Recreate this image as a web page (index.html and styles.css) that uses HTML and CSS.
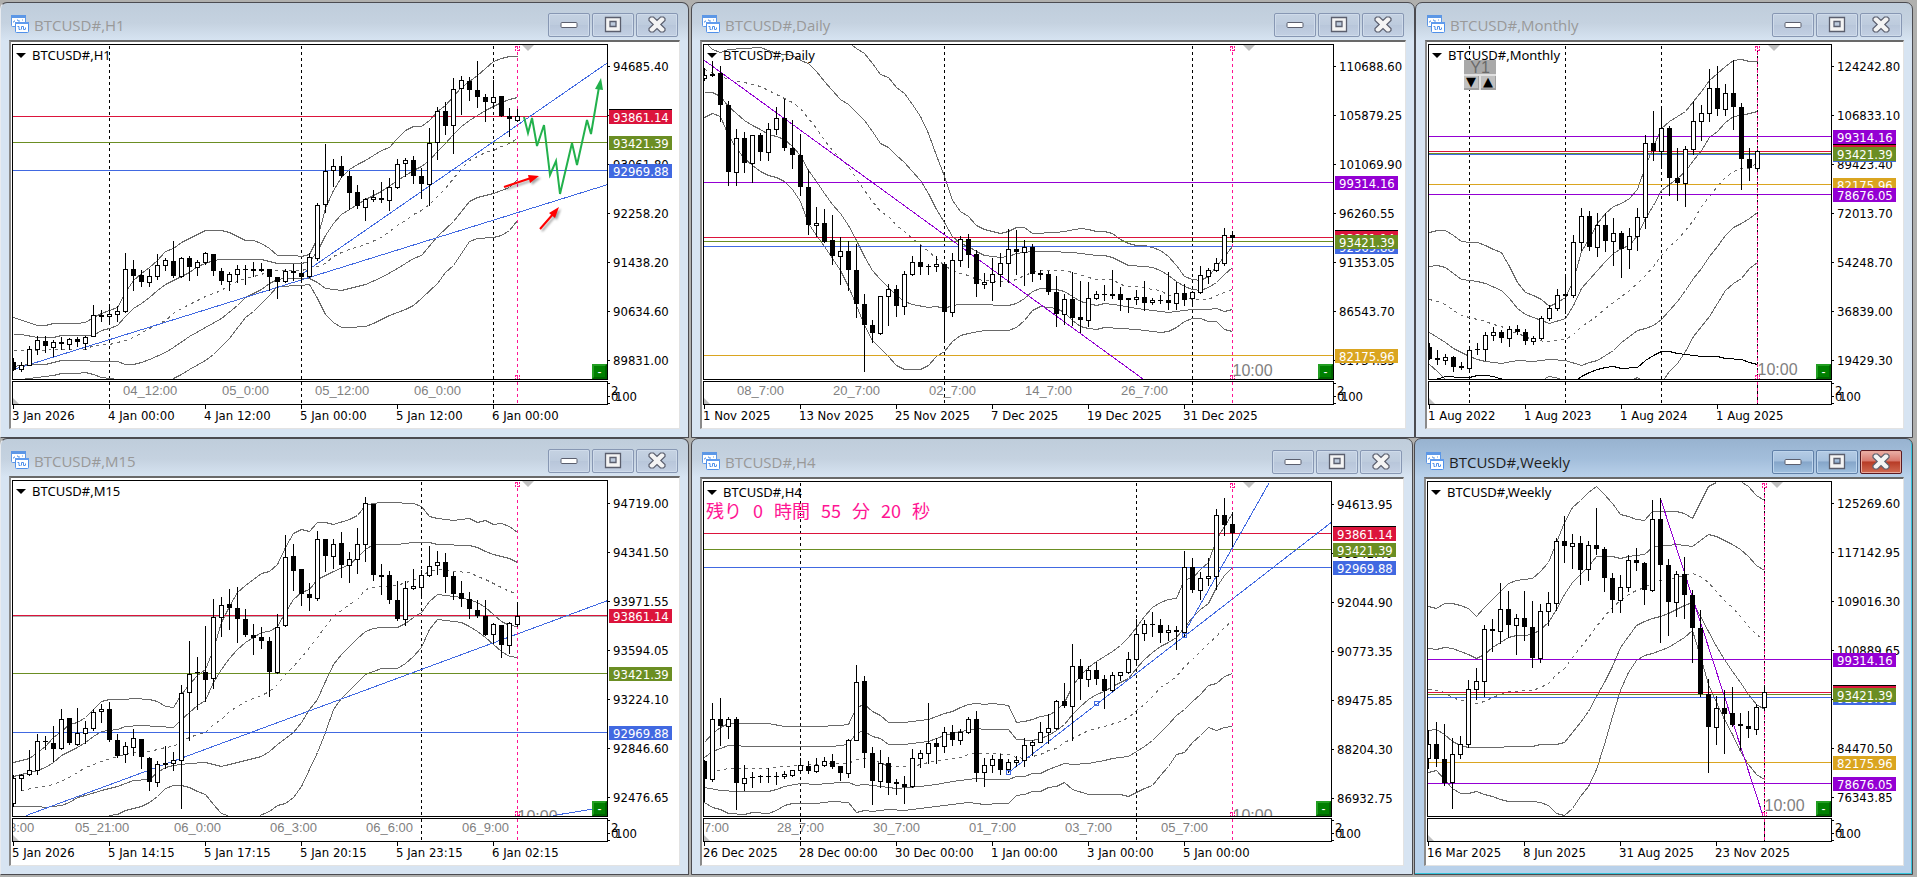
FILE: index.html
```
<!DOCTYPE html>
<html lang="en">
<head>
<meta charset="utf-8">
<title>BTCUSD# charts</title>
<link rel="stylesheet" href="styles.css">
</head>
<body>
<svg class="sprite" width="0" height="0" aria-hidden="true">
  <symbol id="icon-chart" viewBox="0 0 18 18">
    <rect x="0.5" y="0.5" width="14" height="11" rx="1" fill="#fff" stroke="#5c97e6"/>
    <rect x="0" y="0" width="15" height="3" fill="#5c97e6"/>
    <path d="M2 7h1V6h1M6 5h1v1h2M11 5h1" fill="none" stroke="#5c97e6"/>
    <rect x="4.5" y="7.500" width="13" height="10" rx="1" fill="#fff" stroke="#4f90ea"/>
    <rect x="4" y="7" width="14" height="2" fill="#5f9bee"/>
    <path d="M6.500 11.500h1.500v3h1.500M10.500 14.500v-3h2v3h1.500M14.500 12.500v2" fill="none" stroke="#4f90ea"/>
  </symbol>
  <symbol id="icon-min" viewBox="0 0 18 18">
    <rect x="1" y="6.5" width="16" height="5" rx="1" fill="#fff" stroke="#5b5f6e"/>
  </symbol>
  <symbol id="icon-max" viewBox="0 0 18 18">
    <path fill-rule="evenodd" d="M1.5 1.5h15v14h-15zM6 5.500h6v5h-6z" fill="#f4f4f4" stroke="#5b5f6e" stroke-width="1.300"/>
  </symbol>
  <symbol id="icon-close" viewBox="0 0 18 18">
    <path d="M1 2.500L2.500 1H5.500L9 4.500L12.500 1H15.500L17 2.500V4.500L12.800 8.500L17 12.500V14.500L15.500 16H12.500L9 12.500L5.500 16H2.500L1 14.500V12.500L5.200 8.500L1 4.500Z" fill="#f4f4f4" stroke="#5b5f6e" stroke-width="1.200"/>
  </symbol>
</svg>

<main class="desk">
  <div class="desk-row desk-row-top">
    <section class="win win-edge" data-chart="h1">
      <header class="bar"><svg class="bar-icon"><use href="#icon-chart"/></svg><h2 class="bar-title">BTCUSD#,H1</h2>
        <div class="bar-buttons"><button aria-label="Minimize"><svg><use href="#icon-min"/></svg></button><button aria-label="Maximize"><svg><use href="#icon-max"/></svg></button><button class="close" aria-label="Close"><svg><use href="#icon-close"/></svg></button></div></header>
      <div class="client"></div>
    </section>
    <section class="win" data-chart="daily">
      <header class="bar"><svg class="bar-icon"><use href="#icon-chart"/></svg><h2 class="bar-title">BTCUSD#,Daily</h2>
        <div class="bar-buttons"><button aria-label="Minimize"><svg><use href="#icon-min"/></svg></button><button aria-label="Maximize"><svg><use href="#icon-max"/></svg></button><button class="close" aria-label="Close"><svg><use href="#icon-close"/></svg></button></div></header>
      <div class="client"></div>
    </section>
    <section class="win win-wide" data-chart="monthly">
      <header class="bar"><svg class="bar-icon"><use href="#icon-chart"/></svg><h2 class="bar-title">BTCUSD#,Monthly</h2>
        <div class="bar-buttons"><button aria-label="Minimize"><svg><use href="#icon-min"/></svg></button><button aria-label="Maximize"><svg><use href="#icon-max"/></svg></button><button class="close" aria-label="Close"><svg><use href="#icon-close"/></svg></button></div></header>
      <div class="client"></div>
    </section>
  </div>
  <div class="desk-row desk-row-bottom">
    <section class="win win-edge" data-chart="m15">
      <header class="bar"><svg class="bar-icon"><use href="#icon-chart"/></svg><h2 class="bar-title">BTCUSD#,M15</h2>
        <div class="bar-buttons"><button aria-label="Minimize"><svg><use href="#icon-min"/></svg></button><button aria-label="Maximize"><svg><use href="#icon-max"/></svg></button><button class="close" aria-label="Close"><svg><use href="#icon-close"/></svg></button></div></header>
      <div class="client"></div>
    </section>
    <section class="win win-lower" data-chart="h4">
      <header class="bar"><svg class="bar-icon"><use href="#icon-chart"/></svg><h2 class="bar-title">BTCUSD#,H4</h2>
        <div class="bar-buttons"><button aria-label="Minimize"><svg><use href="#icon-min"/></svg></button><button aria-label="Maximize"><svg><use href="#icon-max"/></svg></button><button class="close" aria-label="Close"><svg><use href="#icon-close"/></svg></button></div></header>
      <div class="client"></div>
    </section>
    <section class="win win-lower win-active" data-chart="weekly">
      <header class="bar"><svg class="bar-icon"><use href="#icon-chart"/></svg><h2 class="bar-title">BTCUSD#,Weekly</h2>
        <div class="bar-buttons"><button aria-label="Minimize"><svg><use href="#icon-min"/></svg></button><button aria-label="Maximize"><svg><use href="#icon-max"/></svg></button><button class="close" aria-label="Close"><svg><use href="#icon-close"/></svg></button></div></header>
      <div class="client"></div>
    </section>
  </div>
</main>
<script src="charts.js"></script>
</body>
</html>
```
FILE: styles.css
```
* { box-sizing: border-box; }

html, body { margin: 0; height: 100%; }

body {
  background: #b0b0ae;
  font-family: "DejaVu Sans Condensed", "Noto Sans", sans-serif;
  font-size: 13px;
  color: #000;
  overflow: hidden;
}

.sprite { position: absolute; }

.desk {
  display: grid;
  grid-template-rows: 436fr 437fr;
  min-height: 100vh;
  padding: 2px 4px 2px 0;
}

.desk-row { display: grid; }
.desk-row-top { grid-template-columns: 689fr 726fr 498fr; }
.desk-row-bottom { grid-template-columns: 689fr 724fr 500fr; }

.win {
  display: grid;
  grid-template-rows: 37px 1fr;
  margin-left: 2px;
  padding: 0 8px 8px;
  border: 1px solid #4b4b50;
  border-radius: 7px 7px 0 0;
  background: linear-gradient(#bfcddb, #c5d2e0 20px, #d7e4f2 38px);
}
.win-edge { margin-left: 0; border-left-color: #e8ebf0; }
.win-wide { margin-left: 0; padding-left: 9px; }
.win-lower { padding-top: 1px; }
.win-active {
  margin-left: 1px;
  padding-left: 9px;
  background: linear-gradient(#98b3d0, #a3bedb 20px, #b9d1ea 38px);
  box-shadow: inset -1px -1px 0 #35c5dc;
}

.bar {
  display: flex;
  align-items: center;
  gap: 5px;
  padding: 9px 2px 0;
  height: 37px;
}
.bar-icon { width: 18px; height: 18px; margin-bottom: 4px; }
.bar-title {
  flex: 1;
  margin: 0 0 3px;
  font: 400 15px/20px "Open Sans", "Noto Sans", sans-serif;
  color: #999;
}
.win-active .bar-title { color: #1e1e1e; }

.bar-buttons { display: flex; gap: 2px; margin-bottom: 3px; }
.bar-buttons button {
  display: grid;
  place-items: center;
  width: 42px;
  height: 24px;
  padding: 0;
  border: 1px solid #8797b3;
  border-radius: 2px;
  background: linear-gradient(#c5d2e2, #bdcbdd 50%, #b8c6da 51%, #c3d0e3);
  box-shadow: inset 0 0 0 1px #cfdbea;
}
.bar-buttons svg { width: 18px; height: 18px; }
.win-active .bar-buttons button {
  border-color: #6080a8;
  background: linear-gradient(#b5cce5, #a5c0dd 45%, #85a5c9 50%, #a0c0df);
  box-shadow: inset 0 0 0 1px #bdd4ec;
}
.win-active .bar-buttons .close {
  border-color: #5b1a22;
  background: linear-gradient(#eab0a8, #d8796d 45%, #b73b26 50%, #d06a52);
  box-shadow: inset 0 0 0 1px #e9a99c;
}

.client {
  display: grid;
  grid-template-columns: 1fr 71px;
  grid-template-rows: 1fr 24px 22px;
  row-gap: 1px;
  padding: 2px 0 0 1px;
  border-top: 2px solid #696969;
  border-left: 2px solid #8a8a8a;
  border-right: 1px solid #e3e3e3;
  border-bottom: 1px solid #e3e3e3;
  background: #fff;
}
.client svg { display: block; width: 100%; height: 100%; overflow: hidden; }

.plot { position: relative; border: 1px solid #000; min-height: 300px; }
.plot > svg { position: absolute; inset: 0; }
.sub { border: 1px solid #000; }
.dates { grid-column: 1 / 3; margin-top: -1px; }

.symbol {
  position: absolute;
  top: 1px;
  left: 3px;
  display: flex;
  align-items: center;
  gap: 6px;
  font: 13px/18px "Noto Sans", sans-serif;
}
.symbol::before {
  content: "";
  border: solid transparent;
  border-width: 5px 5px 0;
  border-top-color: #000;
}

.toggle {
  position: absolute;
  right: 0;
  bottom: 0;
  width: 15px;
  height: 15px;
  padding: 0;
  border: 2px solid #006400;
  border-top-color: #229e22;
  border-left-color: #229e22;
  background: #008000;
  color: #fff;
  font: 12px/10px "Liberation Sans", sans-serif;
}

.countdown {
  position: absolute;
  top: 18px;
  left: 2px;
  display: flex;
  gap: 11px;
  color: #ff1493;
  font: 18px/20px "Noto Sans CJK JP", sans-serif;
}

.year-picker {
  position: absolute;
  top: 15px;
  left: 35px;
  display: grid;
  grid-template-columns: 1fr 1fr;
  gap: 2px;
  width: 32px;
  background: #e0e0e0;
}
.year-picker span {
  grid-column: 1 / 3;
  height: 14px;
  background: #a9a9a9;
  color: #696969;
  font: 16px/16px "Liberation Sans", sans-serif;
  text-align: center;
}
.year-picker button {
  height: 14px;
  padding: 0;
  border: solid #a0a0a0;
  border-width: 0 1px 2px 0;
  background: #c0c0c0;
  font: 13px/12px "DejaVu Sans", sans-serif;
  color: #000;
}

.line, .band, .trend { fill: none; shape-rendering: crispEdges; }
.band { stroke: #696969; }
.band-mid { stroke-dasharray: 3 4; }
.band-dark { stroke: #000; }
.trend { stroke: #4169e1; }
.wick, .body, .hollow, .tick { shape-rendering: crispEdges; }
.hollow { fill: #fff; }
.grey { fill: #808080; font-family: "Liberation Sans", sans-serif; }
.grey-small { font-size: 13px; }
.grey-large { font-size: 16px; }
.price-on { fill: #fff; }
.shift { fill: #c0c0c0; }

.crimson { stroke: #dc143c; }
.olive { stroke: #6b8e23; }
.blue { stroke: #4169e1; }
.violet { stroke: #9400d3; }
.gold { stroke: #daa520; }
.silver { stroke: #b0b0b0; }
.pink { stroke: #ff1493; }
.black { stroke: #000; }
.dash { stroke-dasharray: 3 3; }
.dot { stroke-dasharray: 2 4; }
.box-crimson { fill: #dc143c; }
.box-olive { fill: #6b8e23; }
.box-blue { fill: #4169e1; }
.box-violet { fill: #9400d3; }
.box-gold { fill: #daa520; }

.forecast { fill: none; stroke: #22b14c; stroke-width: 2; }
.forecast-tip { fill: #22b14c; }
.arrow { fill: none; stroke: #f00; stroke-width: 2; }
.arrow-tip { fill: #f00; }
.arrows { filter: drop-shadow(2px 2px 1px rgba(0, 0, 0, 0.35)); }
```
FILE: charts.js
```
// Prices are stored in thirds of a pixel; bars are 8px apart.
// candles: type, body top, body bottom, high, low. bands: bar index : level.
const CHARTS = {
  h1: {
    symbol: 'BTCUSD#,H1', top: 45, now: 63, shift: 515,
    candles: 'b1087,1112,1075,1112 w1095,1108,1088,1114 w1048,1096,1038,1096 w1021,1048,1009,1062 b1023,1040,1009,1058 w1027,1042,1022,1070 b1026,1034,1011,1047 w1018,1033,1014,1047 b1017,1028,1013,1040 w1012,1030,1008,1048 w946,1009,915,1010 b945,951,930,965 w943,949,918,965 w934,943,920,965 w808,934,759,936 b808,830,780,870 b825,846,812,858 w829,847,808,858 w796,829,762,838 w781,796,775,810 b783,830,723,831 w775,829,772,833 b774,803,770,840 w787,802,781,827 w760,787,756,794 b762,815,762,827 b813,845,805,854 w823,844,818,870 w808,823,796,846 b807,812,797,854 b809,813,786,828 b807,813,790,815 b807,833,807,872 b831,846,831,896 w814,844,808,848 b813,821,793,840 b819,832,796,843 w772,829,761,831 w616,775,609,780 w514,613,432,638 w499,511,478,558 b499,530,468,532 b528,580,513,628 b576,620,556,624 w598,622,594,662 w592,598,570,603 b594,602,546,606 w562,601,534,632 w493,562,477,566 w481,490,474,528 b480,530,468,551 b528,554,505,594 w430,553,384,617 w334,427,321,477 b333,380,307,402 w268,376,234,461 w241,265,228,342 b243,272,232,302 b270,293,183,321 b291,308,283,363 w292,307,240,318 b290,350,288,350 b348,359,324,408 w349,361,327,363',
    bands: [
      '0:953 3:976 4:975 5:971 8:971 9:967 10:952 11:940 12:932 13:922 14:878 15:842 16:820 17:803 18:780 19:754 20:744 21:728 22:715 24:691 26:692 27:698 29:720 30:722 31:730 32:745 33:766 35:766 36:769 37:763 38:715 39:625 40:570 41:533 42:508 43:494 44:481 45:466 46:452 47:441 48:415 49:390 50:380 51:378 52:362 53:335 54:315 55:290 56:262 57:245 58:225 59:205 60:185 61:174 62:170 63:170',
      '0:1003 1:1003 3:1013 5:1013 6:1007 10:1007 11:990 12:985 13:975 14:950 15:925 16:910 17:893 18:872 19:853 20:842 21:830 22:817 23:800 24:790 25:781 26:778 31:778 32:785 33:790 36:790 37:783 38:755 39:705 40:670 41:643 42:628 44:598 46:575 48:540 49:525 50:510 51:500 52:482 53:455 54:430 55:403 56:380 57:360 58:345 59:330 60:318 61:306 62:298 63:292',
      '0:1098 2:1093 4:1092 6:1081 13:1085 14:1094 15:1094 16:1088 17:1078 19:1057 20:1042 22:1010 24:982 26:955 28:915 29:892 30:880 31:868 32:850 33:837 34:835 37:835 38:848 39:865 40:869 41:871 42:866 44:854 46:832 48:805 50:775 51:765 53:710 55:665 56:635 57:605 58:592 60:580 61:572 62:562 63:538',
      '1:1137 3:1132 5:1127 6:1121 8:1120 9:1117 10:1123 11:1131 12:1135 13:1137',
      '20:1136 21:1122 22:1107 24:1081 25:1063 27:1015 29:952 30:935 31:910 32:885 33:858 36:856 37:853 38:895 39:943 40:968 41:981 42:982 44:979 45:970 47:945 49:928 50:915 51:895 53:850 54:818 55:795 56:760 57:725 58:715 60:712 61:706 62:690 63:660'
    ],
    mid: '0:1052 1:1050 4:1052 5:1047 9:1047 10:1036 12:1034 13:1028 14:1022 15:1012 17:985 19:960 20:940 21:924 24:888 26:870 27:853 29:835 31:822 32:812 36:812 37:805 38:800 39:790 40:770 41:757 42:748 44:732 46:712 48:675 49:660 50:642 51:630 52:612 53:590 54:565 55:535 56:505 57:480 58:470 59:458 60:450 61:438 62:430 63:414',
    trends: [[0, 1107, 74.3, 553], [36, 822, 74.3, 187]],
    levels: [[349, 'crimson'], [427, 'olive'], [511, 'blue']],
    verticals: [12, 36, 60],
    axis: [[199, '94685.40'], [346, '93865.40'], [493, '93061.80'], [640, '92258.20'], [787, '91438.20'], [934, '90634.60'], [1081, '89831.00']],
    boxes: [[349, 'crimson', '93861.14', 1], [427, 'olive', '93421.39'], [511, 'blue', '92969.88']],
    subs: [[110, '04_12:00'], [209, '05_0:00'], [302, '05_12:00'], [401, '06_0:00']],
    dates: ['3 Jan 2026', '4 Jan 00:00', '4 Jan 12:00', '5 Jan 00:00', '5 Jan 12:00', '6 Jan 00:00'],
    forecast: true
  },
  daily: {
    symbol: 'BTCUSD#,Daily', top: 45, now: 66, shift: 545, timer: 1128,
    candles: 'w225,234,205,240 b222,228,183,230 b219,317,199,365 b315,518,303,557 w415,517,387,557 b414,491,396,517 w406,491,405,548 b405,458,399,482 w388,458,369,482 w355,388,321,402 b354,446,297,452 b444,467,362,504 b465,563,402,587 b561,677,510,702 w670,677,621,708 b669,726,627,728 b720,770,645,792 w754,770,711,852 b753,812,723,872 b810,912,732,951 b912,977,882,1115 b975,1001,960,1028 w889,1001,888,1004 w868,889,852,975 b867,920,856,948 w823,920,813,944 w787,823,769,827 b786,803,735,824 b798,802,792,824 w793,798,768,815 b792,938,792,1020 w781,938,759,948 w718,781,708,800 b717,765,702,803 b762,854,750,890 w847,853,820,864 w823,847,774,900 w790,823,759,860 w748,790,687,846 b747,758,692,822 w742,758,722,855 b741,824,732,845 b821,825,811,838 b822,878,814,882 b876,944,828,978 w898,943,882,974 b897,954,816,975 b951,962,843,998 w895,962,846,980 w882,895,873,898 b882,887,855,902 b882,888,810,894 b882,900,861,932 b896,900,894,938 w892,898,870,914 b891,909,843,932 w901,907,896,914 b900,903,885,910 b900,911,816,927 w880,910,846,927 b879,900,852,915 w877,896,873,910 w826,877,798,880 w811,829,804,851 w790,811,774,815 w706,790,684,795 b705,714,693,726',
    bands: [
      '18.5:135 19:145 20:160 21:190 22:222 23:232 24:262 25:279 26:312 27:350 28:400 29:465 30:530 31:600 32:635 33:650 34:675 35:688 37:699 38:693 39:683 40:683 41:699 44:697 45:694 47:685 48:687 49:694 50:695 51:700 52:718 53:731 54:735 55:736 56:742 57:750 58:770 59:795 60:828 61:838 62:841 63:829 64:800 65:770 66:738',
      '0.5:135 1:148 2:156 3:147 7:142 8:150 9:160 10:162 11:167 12:180 13:190 14:215 15:243 16:270 17:298 18:312 19:337 20:362 21:395 22:430 23:441 24:465 25:487 26:515 27:542 28:580 29:628 30:668 31:710 32:730 33:740 34:755 35:765 36:770 37:772 38:768 39:760 40:757 41:754 44:754 45:757 46:758 48:764 49:766 50:767 51:772 52:785 53:796 55:799 56:803 57:812 58:825 59:845 60:860 61:867 62:871 63:862 64:848 65:822 66:803',
      '0:277 1:277 2:288 3:318 4:340 5:362 6:375 7:388 8:402 9:408 10:418 11:440 12:465 13:510 14:545 15:580 16:612 17:640 18:675 19:720 20:770 21:810 22:838 23:862 24:885 25:903 26:913 28:921 29:919 30:925 31:917 32:912 34:914 38:916 39:911 40:896 41:875 42:866 44:868 45:875 46:888 47:903 48:911 49:916 50:910 52:916 54:924 56:932 58:937 60:931 61:928 63:928 64:925 65:934 66:928',
      '0:352 1:340 2:350 3:405 4:445 5:475 6:495 7:513 8:525 9:533 10:545 11:567 12:605 13:670 14:705 15:740 16:775 17:812 18:860 19:915 20:975 21:1020 22:1045 23:1068 24:1095 25:1107 27:1107 28:1095 29:1068 30:1055 31:1025 32:1007 33:1000 35:992 38:990 39:982 40:962 41:930 42:918 44:925 45:937 46:960 47:980 48:986 49:989 50:983 52:984 54:988 56:994 57:997 58:993 59:982 60:963 61:956 62:956 63:964 64:965 65:988 66:994'
    ],
    mid: '0:208 3:238 5:246 7:260 9:283 10:295 11:306 12:325 13:355 14:385 15:420 16:450 17:475 18:500 19:535 20:570 21:605 22:635 23:650 24:675 25:693 26:715 27:733 28:755 29:775 30:795 31:812 32:820 33:827 34:838 36:843 38:844 39:838 40:825 41:817 42:812 43:811 45:811 46:818 48:832 49:838 51:837 52:852 53:858 54:860 56:868 57:872 58:885 60:890 61:897 63:897 64:885 65:878 66:867',
    trends: [[0, 180, 54.9, 1137, 'violet']],
    levels: [[547, 'violet'], [712, 'crimson'], [724, 'olive'], [739, 'blue'], [1066, 'gold']],
    verticals: [30, 61],
    axis: [[199, '110688.60'], [346, '105879.25'], [493, '101069.90'], [640, '96260.55'], [787, '91353.05'], [934, '86543.70'], [1081, '81734.35']],
    boxes: [[547, 'violet', '99314.16'], [712, 'crimson', '93861.14', 1], [739, 'blue', '92969.88'], [724, 'olive', '93421.39'], [1066, 'gold', '82175.96']],
    subs: [[33, '08_7:00'], [129, '20_7:00'], [225, '02_7:00'], [321, '14_7:00'], [417, '26_7:00']],
    dates: ['1 Nov 2025', '13 Nov 2025', '25 Nov 2025', '7 Dec 2025', '19 Dec 2025', '31 Dec 2025']
  },
  monthly: {
    symbol: 'BTCUSD#,Monthly', top: 45, now: 41, shift: 345, timer: 1125, nowBack: true, picker: true,
    candles: 'b1042,1077,1030,1078 b1074,1082,1050,1092 w1072,1081,1064,1092 b1071,1101,1068,1115 b1098,1106,1088,1107 w1052,1105,1038,1110 b1047,1051,1030,1064 w1006,1048,996,1080 w997,1006,982,1020 b996,1016,990,1028 w988,1015,978,1038 b987,998,975,1002 b996,1024,988,1032 w1015,1024,1010,1034 w955,1015,948,1018 w925,955,916,960 w886,925,867,930 b884,888,830,940 w727,886,705,892 w649,727,624,750 b648,743,633,750 w676,742,639,770 b675,725,640,755 w700,724,654,795 b699,748,693,833 w710,748,684,804 w652,709,624,750 w430,652,405,684 b429,455,333,482 w385,454,324,500 b384,536,380,587 b534,550,446,602 w448,550,438,620 w364,448,303,462 w340,364,316,420 w265,340,207,363 b264,328,198,345 w280,328,252,345 b279,323,182,387 b321,478,310,567 b477,506,446,542 w454,505,450,512',
    bands: [
      '0:698 1:691 2:691 3:705 4:724 5:727 6:728 7:735 8:748 9:758 10:800 11:848 12:876 13:885 14:897 15:919 16:908 17:892 18:840 19:755 20:715 21:670 22:640 23:618 24:609 25:595 26:568 27:500 28:440 29:385 30:365 31:350 32:335 33:305 34:275 35:240 36:220 37:200 38:182 39:177 40:183 41:184',
      '0:800 1:797 2:802 3:820 4:838 6:843 7:850 9:870 10:895 11:925 12:942 13:952 14:960 15:970 17:955 18:915 19:865 20:838 21:810 22:785 23:760 24:745 25:735 26:705 27:655 28:615 29:570 30:552 31:535 32:515 33:480 34:450 35:412 36:395 37:368 38:350 39:345 41:333',
      '0:997 1:1013 2:1028 3:1045 4:1058 5:1070 6:1078 7:1083 9:1090 11:1080 13:1084 15:1078 17:1081 19:1096 20:1088 21:1080 22:1067 23:1050 24:1028 25:1010 26:992 27:985 28:975 29:958 30:930 31:905 32:870 33:835 34:805 35:770 36:740 37:705 38:682 39:670 40:655 41:637',
      '0:1093 1:1115 2:1137', '14.4:1135 15:1129 16.3:1135', '25.5:1137 26:1132 26.4:1137',
      '29.3:1137 30:1115 31:1090 32:1055 33:1010 34:978 35:948 36:910 37:870 38:850 39:836 40:805 41:786'
    ],
    dark: ['0.8:1137 2:1129 4:1131 5:1131 6:1127 7:1126 8:1129 9.2:1137',
      '18.5:1137 19:1128 20:1116 21:1107 22:1102 23:1099 24:1105 26:1102 27:1080 28:1065 29:1053 30:1055 31:1060 33:1067 34:1069 36:1068 37:1074 39:1077 40:1086 41:1093'],
    mid: '0:898 1:904 2:912 3:930 4:947 5:952 6:957 7:964 8:972 9:980 10:990 11:1000 12:1010 13:1020 15:1025 16:1021 17:1017 18:1003 19:980 20:965 21:945 22:925 23:907 24:888 25:870 26:850 27:825 28:800 29:765 30:740 31:718 32:692 33:660 34:620 35:590 36:560 37:532 38:515 39:505 40:504 41:486',
    trends: [],
    levels: [[409, 'violet'], [454, 'crimson'], [460, 'olive'], [463, 'blue'], [553, 'gold'], [583, 'violet']],
    verticals: [5, 17, 29],
    axis: [[199, '124242.80'], [346, '106833.10'], [493, '89423.40'], [640, '72013.70'], [787, '54248.70'], [934, '36839.00'], [1081, '19429.30']],
    boxes: [[409, 'violet', '99314.16'], [454, 'crimson', '93861.14', 1], [463, 'blue', '92969.88'], [460, 'olive', '93421.39'], [553, 'gold', '82175.96'], [583, 'violet', '78676.05']],
    subs: [],
    dates: ['1 Aug 2022', '1 Aug 2023', '1 Aug 2024', '1 Aug 2025']
  },
  m15: {
    symbol: 'BTCUSD#,M15', top: 45, now: 63, shift: 515, timer: 1159,
    candles: 'w1026,1102,1017,1110 w1018,1027,1014,1064 w1003,1015,942,1018 w916,1003,894,1014 b916,920,900,940 b921,941,870,975 w850,937,819,939 b846,923,846,925 w892,925,816,928 w877,892,856,922 w829,878,820,882 w820,826,804,860 b819,914,798,916 b912,960,894,963 w931,956,918,980 w907,934,880,958 b909,965,909,996 b966,1040,964,1064 w985,1040,976,1050 b982,987,930,998 w973,983,948,1002 w772,973,747,1118 w715,769,615,912 b708,713,663,819 b708,732,570,795 w544,728,489,758 w508,545,483,600 b504,518,459,579 b516,551,453,618 b549,597,519,602 b597,606,564,654 b603,615,573,638 b615,708,603,782 w574,709,534,712 w364,568,297,570 b360,405,325,462 b399,476,399,507 b474,486,441,522 w310,487,285,494 b309,360,309,405 w325,361,310,396 b321,387,288,423 w370,388,350,438 w325,370,276,411 w202,325,183,375 b204,417,204,432 b417,423,384,476 b417,494,405,503 b492,551,435,552 w457,550,435,567 w451,458,399,461 w418,455,402,480 w391,418,330,420 w379,388,345,414 b378,423,351,468 b420,474,408,489 b471,491,435,510 b489,521,468,546 b522,542,492,545 b540,597,492,598 w566,596,562,623 b567,629,567,665 w562,628,558,653 w541,566,498,570',
    bands: [
      '0:979 2:968 3:950 4:930 5:905 6:885 7:865 8:858 9:845 10:820 11:797 12:791 14:790 15:788 17:790 18:797 19:810 20:814 21:775 22:745 23:718 24:700 25:640 26:560 27:510 28:470 29:448 30:430 31:412 32:405 33:385 34:335 35:293 36:281 37:287 38:260 39:260 40:264 42:250 43:238 44:208 45:203 46:199 48:199 49:202 50:203 51:210 52:240 53:247 55:252 57:248 58:258 59:253 60:265 61:262 62:272 63:288',
      '0:1021 1:1015 2:1009 3:1003 4:993 5:980 6:958 8:935 9:920 10:900 11:886 13:880 14:872 16:868 18:871 20:874 21:850 22:830 23:808 24:793 25:740 26:700 27:668 28:640 29:620 30:605 31:590 32:585 33:570 34:530 35:490 36:470 37:460 38:430 40:405 42:385 43:365 44:340 45:325 48:325 49:321 50:319 52:320 53:325 57:328 58:335 59:345 60:355 61:360 62:367 63:380',
      '0:1112 3:1110 4:1115 6:1108 7:1100 8:1085 9:1078 11:1064 13:1050 15:1033 17:1030 18:1010 19:995 20:987 22:983 24:980 26:990 28:980 30:968 31:960 32:945 33:925 34:908 35:890 36:860 37:820 38:790 39:735 40:685 41:655 42:632 43:608 44:585 45:577 46:574 48:574 49:562 50:545 51:530 52:495 53:475 54:478 55:480 56:485 58:498 59:515 60:535 61:555 62:567 63:571',
      '12:1139 13:1135 14:1122 16:1110 17:1100 18:1080 19:1057 20:1049 21:1047 22:1055 23:1065 24:1075 25:1105 26:1132 26.8:1139',
      '30.8:1139 32:1125 33:1108 34:1102 35:1085 36:1050 37:1000 38:950 39:890 40:820 41:788 42:764 43:740 44:715 45:705 46:698 48:697 49:683 50:660 51:635 52:580 53:550 54:552 56:560 57:570 58:585 59:605 60:625 61:645 62:660 63:664'
    ],
    mid: '1:1062 3:1055 5:1045 7:1023 9:995 11:975 13:960 15:948 17:945 19:935 20:930 21:915 22:905 23:895 24:888 25:865 26:850 27:825 29:797 31:778 32:765 33:745 34:715 35:690 36:665 37:635 38:605 39:570 40:540 41:522 42:505 43:490 44:460 45:455 46:450 48:447 49:440 50:432 51:418 52:407 53:401 55:405 57:408 58:420 59:430 60:443 61:455 62:465 63:472',
    trends: [[1.6, 1139, 74.3, 493], [67.5, 1137, 74.3, 1112]],
    levels: [[541, 'silver'], [538, 'crimson'], [712, 'olive'], [889, 'blue']],
    verticals: [51],
    axis: [[202, '94719.00'], [349, '94341.50'], [496, '93971.55'], [643, '93594.05'], [790, '93224.10'], [937, '92846.60'], [1084, '92476.65']],
    boxes: [[538, 'crimson', '93861.14'], [712, 'olive', '93421.39'], [889, 'blue', '92969.88']],
    subs: [[-33, '05_18:00'], [62, '05_21:00'], [161, '06_0:00'], [257, '06_3:00'], [353, '06_6:00'], [449, '06_9:00']],
    dates: ['5 Jan 2026', '5 Jan 14:15', '5 Jan 17:15', '5 Jan 20:15', '5 Jan 23:15', '6 Jan 02:15']
  },
  h4: {
    symbol: 'BTCUSD#,H4', top: 46, now: 66, shift: 545, timer: 1157, countdown: true,
    candles: 'b975,1031,972,1095 w850,1030,801,1035 b849,872,786,927 w850,871,843,906 b849,1043,843,1121 w1027,1042,987,1064 b1023,1028,1010,1053 b1020,1025,1017,1039 b1020,1025,998,1040 b1020,1025,1010,1046 w1015,1021,1005,1028 w1003,1018,1002,1020 w988,1003,966,1012 b990,1007,976,1012 w988,1006,966,1008 w976,989,963,992 b975,993,954,996 b990,1013,990,1032 w913,1013,909,1025 w739,913,687,914 b735,953,720,993 b951,1037,933,1104 w982,1036,942,1055 b981,1043,963,1074 b1040,1046,1030,1074 b1044,1053,1020,1101 w967,1052,939,1055 w952,967,942,993 w922,952,801,982 b921,935,907,981 w889,931,873,948 b888,914,867,927 w889,913,879,924 w850,889,843,891 b849,1011,825,1035 w989,1009,966,1052 w970,989,957,1010 b971,1002,955,1016 w979,1000,970,1010 w973,979,960,992 w928,973,906,990 w919,928,913,957 w889,919,858,920 w877,889,835,922 w796,878,792,880 b795,812,741,815 w690,811,624,912 b690,729,669,789 w703,731,690,750 b702,731,680,746 b729,765,717,816 w718,764,708,765 w709,718,708,734 w670,709,648,711 w595,670,550,684 w565,593,553,612 b564,569,528,602 b567,591,549,620 w583,589,568,612 b583,590,570,639 w394,590,345,605 b393,464,366,468 w427,463,408,489 w421,427,366,447 w238,421,219,461 b237,267,186,299 b264,293,228,330',
    bands: [
      '0:918 1:893 2:875 3:861 8:862 10:870 14:871 17:868 18:864 19:815 20:805 21:825 22:838 23:859 25:860 27:853 28:850 29:842 30:833 31:826 32:815 33:806 34:802 35:804 36:802 38:808 39:858 40:855 41:850 42:842 43:838 44:822 45:800 46:750 47:718 48:693 49:676 50:662 51:645 52:627 53:603 54:575 55:540 56:513 57:500 58:490 59:486 60:430 61:428 62:400 63:380 64:310 65:270 66:232',
      '0:963 1:945 2:938 3:928 6:931 11:930 16:930 18:924 19:890 20:886 21:900 22:907 23:925 25:925 27:920 28:915 29:907 30:898 31:892 32:885 33:882 34:876 35:880 38:880 39:911 41:912 42:906 43:898 44:884 45:865 46:835 47:810 48:790 49:775 50:765 51:750 52:740 53:728 54:697 55:670 56:648 57:632 58:618 59:605 60:575 61:545 62:520 63:503 64:455 65:418 66:394',
      '0:1053 2:1062 4:1066 8:1066 9:1060 10:1052 12:1042 14:1045 17:1040 18:1040 19:1048 20:1045 22:1052 24:1057 27:1052 29:1045 31:1037 34:1026 36:1029 38:1030 39:1022 40:1021 41:1012 42:1011 43:1000 44:992 45:983 46:985 48:982 50:974 51:968 53:961 54:947 55:930 56:912 57:890 58:865 59:838 60:820 61:797 62:775 63:748 64:741 65:722 66:712',
      '0:1100 1:1114 2:1120 3:1131 5:1135 6:1130 8:1131 9:1124 10:1108 11:1103 12:1102 14:1102 16:1096 18:1099 19:1129 20:1123 21:1125 23:1120 25:1122 28:1114 31:1105 33:1099 35:1105 37:1101 38:1102 39:1077 40:1074 41:1067 42:1065 43:1054 44:1050 45:1038 46:1060 48:1075 52:1076 53:1080 54:1070 55:1058 56:1047 57:1018 58:990 59:955 60:948 61:918 62:898 63:875 64:883 65:874 66:872'
    ],
    mid: '1.6:1003 3:997 8:997 10:990 12:988 14:985 17:983 18:981 19:970 20:968 21:973 22:980 23:991 26:990 28:978 30:970 32:963 33:955 34:952 36:953 38:955 39:965 40:968 41:960 42:955 43:943 44:936 45:920 46:908 48:883 50:870 52:855 53:845 54:822 55:805 56:780 57:755 58:740 59:720 60:692 61:670 62:645 63:622 64:600 65:575 66:552',
    trends: [[38, 1009, 78.5, 255], [60, 590, 70.6, 139]],
    anchors: [[38, 1009], [49, 802], [60, 597]],
    levels: [[292, 'crimson'], [340, 'olive'], [394, 'blue']],
    verticals: [12, 54],
    axis: [[205, '94613.95'], [352, '93342.40'], [499, '92044.90'], [646, '90773.35'], [793, '89475.85'], [940, '88204.30'], [1087, '86932.75']],
    boxes: [[292, 'crimson', '93861.14', 1], [340, 'olive', '93421.39'], [394, 'blue', '92969.88']],
    subs: [[-22, '26_7:00'], [73, '28_7:00'], [169, '30_7:00'], [265, '01_7:00'], [361, '03_7:00'], [457, '05_7:00']],
    dates: ['26 Dec 2025', '28 Dec 00:00', '30 Dec 00:00', '1 Jan 00:00', '3 Jan 00:00', '5 Jan 00:00']
  },
  weekly: {
    symbol: 'BTCUSD#,Weekly', top: 46, now: 42, shift: 349, timer: 1125, nowBack: true,
    candles: 'w925,966,882,998 b924,971,858,990 b969,1041,864,1047 w955,1040,906,1118 w925,955,900,966 w760,926,732,935 w736,760,696,790 w580,736,567,780 b579,587,549,647 w520,587,441,623 b519,569,465,603 w547,569,534,654 b546,575,465,612 b573,668,495,693 w526,668,504,678 w502,526,468,567 w316,502,306,524 b315,332,240,378 w322,331,295,396 b321,402,300,444 w328,401,316,432 b327,341,216,356 b339,428,334,467 b426,494,411,528 w454,493,417,530 w373,455,358,465 b372,383,336,402 b381,464,378,504 w250,463,192,465 b249,389,186,618 b387,500,370,597 w415,499,405,540 b414,479,363,546 b477,578,462,678 b576,776,522,780 b774,875,729,1008 w817,874,780,924 b816,834,762,951 b831,867,753,870 b864,872,831,940 b870,881,825,903 w814,880,804,896 w769,814,750,822',
    bands: [
      '0:512 1:517 2:503 3:502 4:508 5:518 6:541 7:515 8:490 9:465 10:442 11:434 13:428 14:405 15:378 16:320 17:260 18:213 19:193 20:168 21:151 22:175 23:203 24:235 25:240 26:250 27:253 28:226 29:226 31:227 32:232 33:246 34:200 35:150 36:138', '39.2:138 40:150 41:178 42:193',
      '0:638 1:640 2:634 3:637 4:645 5:655 6:668 7:655 8:635 9:618 10:605 11:598 12:598 13:595 14:580 15:560 16:520 17:475 18:438 19:415 20:390 21:362 23:362 24:368 25:362 27:355 28:335 29:328 30:329 31:326 33:331 34:312 35:295 36:302 37:312 38:325 39:340 40:362 41:388 42:402',
      '0:884 1:880 2:895 3:915 4:928 5:934 8:933 9:934 10:932 13:931 14:925 16:925 17:918 18:890 19:858 20:825 21:780 22:740 23:690 24:635 25:600 26:568 27:555 28:547 29:540 30:533 31:520 32:508 33:498 34:540 35:585 36:630 37:670 38:705 39:740 40:775 41:805 42:820',
      '0:1010 1:1002 2:1030 3:1058 4:1073 5:1073 6:1066 7:1075 8:1080 9:1089 10:1095 13:1097 14:1100 15:1108 16:1132 17:1138 18:1118 19:1080 20:1050 21:1000 22:925 23:840 24:762 25:710 26:673 27:658 28:652 29:643 30:635 31:620 32:605 33:582 34:660 35:745 36:800 37:850 38:895 39:945 40:985 41:1015 42:1030'
    ],
    mid: '0:760 1:762 2:770 3:785 4:792 5:795 6:801 7:797 8:785 9:775 10:767 13:764 14:753 15:742 16:715 17:697 18:665 19:635 20:605 21:570 22:540 23:515 24:492 25:475 26:462 27:455 28:440 29:433 30:430 32:418 33:412 34:420 35:440 36:465 37:492 38:515 39:540 40:570 41:595 42:612',
    trends: [[29, 187, 41.8, 1139, 'violet']],
    levels: [[670, 'violet'], [769, 'crimson'], [775, 'olive'], [784, 'blue'], [979, 'gold'], [1042, 'violet']],
    verticals: [],
    axis: [[202, '125269.60'], [349, '117142.95'], [496, '109016.30'], [643, '100889.65'], [790, '92763.00'], [937, '84470.50'], [1084, '76343.85']],
    boxes: [[670, 'violet', '99314.16'], [769, 'crimson', '93861.14', 1], [784, 'blue', '92969.88'], [775, 'olive', '93421.39'], [979, 'gold', '82175.96'], [1042, 'violet', '78676.05']],
    subs: [],
    dates: ['16 Mar 2025', '8 Jun 2025', '31 Aug 2025', '23 Nov 2025']
  }
};

const line = (cls, x1, y1, x2, y2) => `<line class="${cls}" x1="${x1}" y1="${y1}" x2="${x2}" y2="${y2}"/>`;
const rect = (cls, x, y, w, h) => `<rect class="${cls}" x="${x}" y="${y}" width="${w}" height="${h}"/>`;
const text = (cls, x, y, s) => `<text class="${cls}" x="${x}" y="${y}">${s}</text>`;

function drawPlot(c) {
  const px = v => Math.floor(v / 3) - c.top;
  const bar = i => i * 8 + 0.5;
  const path = (s, cls) => `<polyline class="band ${cls}" points="${s.split(' ').map(p => {
    const [i, v] = p.split(':').map(Number);
    return `${bar(i)},${px(v) + 0.5}`;
  }).join(' ')}"/>`;
  let out = '';
  c.verticals.forEach(i => { out += line('line black dash', bar(i), 1, bar(i), '100%'); });
  c.bands.forEach(b => { out += path(b, ''); });
  (c.dark || []).forEach(b => { out += path(b, 'band-dark'); });
  out += path(c.mid, 'band-mid');
  c.levels.forEach(([v, col]) => { out += line('line ' + col, 0, px(v) + 0.5, '100%', px(v) + 0.5); });
  c.trends.forEach(([a, v, b, w, col]) => { out += line('trend ' + (col || 'blue'), bar(a), px(v) + 0.5, bar(b), px(w) + 0.5); });
  const x = bar(c.now);
  if (c.nowBack) out += line('line black dot', x, 5, x, '100%');
  out += line('line pink dash', x, 1, x, '100%');
  out += `<rect class="line pink" x="${x - 2}" y="1.5" width="4" height="4" stroke-dasharray="2 1"/>`;
  out += `<rect class="line pink" x="${x - 2}" y="330.5" width="4" height="4" stroke-dasharray="2 1"/>`;
  c.candles.split(' ').forEach((s, i) => {
    const [t, b, h, l] = s.slice(1).split(',').map(v => px(+v));
    const cx = i * 8;
    out += rect('wick', cx, h, 1, l - h + 1);
    if (s[0] === 'b') out += rect('body', cx - 2, t, 5, Math.max(b - t, 1));
    else out += rect('body', cx - 2, t, 5, b - t + 1) + rect('hollow', cx - 1, t + 1, 3, Math.max(b - t - 1, 1));
  });
  (c.anchors || []).forEach(([i, v]) => { out += `<rect class="line blue" x="${bar(i) - 2}" y="${px(v) - 1.5}" width="4" height="4"/>`; });
  out += `<path class="shift" d="M${c.shift - 6} 0h12l-6 6z"/>`;
  if (c.timer) out += text('grey grey-large', x, px(c.timer), '10:00');
  if (c.forecast) {
    out += '<polyline class="forecast" points="511,72 515,88 519,73 524,101 531,80 537,130 543,116 547,149 559,98 564,120 574,75 578,89 586,42"/>'
      + '<path class="forecast-tip" d="M588 33L590 45L582 44Z"/>'
      + '<g class="arrows"><path class="arrow" d="M491 142L518 133M527 184L541 168"/>'
      + '<path class="arrow-tip" d="M526 131L515 130L517 138ZM546 162L536 168L542 173Z"/></g>';
  }
  return out;
}

function drawAxis(c) {
  const px = v => Math.floor(v / 3) - c.top;
  let out = '';
  c.axis.forEach(([v, s]) => { out += rect('tick', 0, px(v) + 1, 2, 1) + text('', 5, px(v) + 6, s); });
  c.boxes.forEach(([v, col, s, edge]) => {
    const y = px(v) + 1;
    if (edge) out += rect('tick', 1, y - 7, 63, 1);
    out += rect('box-' + col, 1, y - 6, 63, 14) + text('price-on', 5, y + 6, s);
  });
  return out;
}

document.querySelectorAll('.win').forEach(win => {
  const c = CHARTS[win.dataset.chart];
  const marks = c.verticals.map(i => line('line black dash', i * 8 + 0.5, 0, i * 8 + 0.5, '100%')).join('');
  const now = c.now * 8 + 0.5;
  const sub = marks
    + (c.nowBack ? line('line black', now, 0, now, '100%') : '')
    + line('line pink dash', now, 0, now, '100%')
    + c.subs.map(([x, s]) => text('grey grey-small', x, 13, s)).join('')
    + '<path class="shift" d="M0 16L6 22H0z"/>';
  const dates = c.dates.map((s, i) => rect('tick', i * 96 + 1, 0, 1, 4) + text('', i * 96, 15, s)).join('');
  win.querySelector('.client').innerHTML = `
    <div class="plot"><svg>${drawPlot(c)}</svg>
      <div class="symbol">${c.symbol}</div>
      ${c.countdown ? '<div class="countdown"><span>残り</span><span>0</span><span>時間</span><span>55</span><span>分</span><span>20</span><span>秒</span></div>' : ''}
      ${c.picker ? '<div class="year-picker"><span>Y1</span><button aria-label="Previous year">▼</button><button aria-label="Next year">▲</button></div>' : ''}
      <button class="toggle" aria-label="Toggle panel">-</button></div>
    <svg class="axis">${drawAxis(c)}</svg>
    <div class="sub"><svg>${sub}</svg></div>
    <svg class="axis">${rect('tick', 0, 2, 2, 1)}${rect('tick', 0, 15, 2, 1)}${rect('tick', 0, 22, 2, 1)}${text('', 3, 14, '2')}${text('', 3, 20, '0.00')}${text('', 7, 20, '1')}</svg>
    <svg class="dates">${dates}</svg>`;
});
```
